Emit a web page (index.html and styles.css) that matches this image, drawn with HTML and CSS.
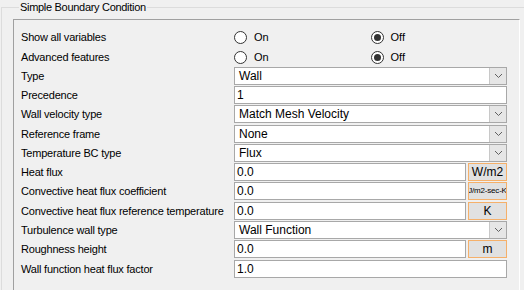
FILE: index.html
```html
<!DOCTYPE html>
<html>
<head>
<meta charset="utf-8">
<link rel="stylesheet" href="styles.css">
</head>
<body>
<fieldset class="group">
  <legend class="group-title">Simple Boundary Condition</legend>
  <div class="panel">
    <div class="grid">
      <div class="label radio-label">Show all variables</div>
      <div class="radios">
        <label class="radio"><span class="dot"></span><span>On</span></label>
        <label class="radio"><span class="dot checked"></span><span>Off</span></label>
      </div>

      <div class="label radio-label">Advanced features</div>
      <div class="radios">
        <label class="radio"><span class="dot"></span><span>On</span></label>
        <label class="radio"><span class="dot checked"></span><span>Off</span></label>
      </div>

      <div class="label">Type</div>
      <div class="combo"><span class="value">Wall</span><span class="drop"><svg width="9" height="6" viewBox="0 0 9 6"><polyline points="1,1 4.5,4.5 8,1" fill="none" stroke="#606060" stroke-width="1"/></svg></span></div>

      <div class="label">Precedence</div>
      <div class="field"><span class="input">1</span></div>

      <div class="label">Wall velocity type</div>
      <div class="combo"><span class="value">Match Mesh Velocity</span><span class="drop"><svg width="9" height="6" viewBox="0 0 9 6"><polyline points="1,1 4.5,4.5 8,1" fill="none" stroke="#606060" stroke-width="1"/></svg></span></div>

      <div class="label">Reference frame</div>
      <div class="combo"><span class="value">None</span><span class="drop"><svg width="9" height="6" viewBox="0 0 9 6"><polyline points="1,1 4.5,4.5 8,1" fill="none" stroke="#606060" stroke-width="1"/></svg></span></div>

      <div class="label">Temperature BC type</div>
      <div class="combo"><span class="value">Flux</span><span class="drop"><svg width="9" height="6" viewBox="0 0 9 6"><polyline points="1,1 4.5,4.5 8,1" fill="none" stroke="#606060" stroke-width="1"/></svg></span></div>

      <div class="label">Heat flux</div>
      <div class="field"><span class="input">0.0</span><span class="unit">W/m2</span></div>

      <div class="label">Convective heat flux coefficient</div>
      <div class="field"><span class="input">0.0</span><span class="unit small">J/m2-sec-K</span></div>

      <div class="label">Convective heat flux reference temperature</div>
      <div class="field"><span class="input">0.0</span><span class="unit">K</span></div>

      <div class="label">Turbulence wall type</div>
      <div class="combo"><span class="value">Wall Function</span><span class="drop"><svg width="9" height="6" viewBox="0 0 9 6"><polyline points="1,1 4.5,4.5 8,1" fill="none" stroke="#606060" stroke-width="1"/></svg></span></div>

      <div class="label">Roughness height</div>
      <div class="field"><span class="input">0.0</span><span class="unit">m</span></div>

      <div class="label">Wall function heat flux factor</div>
      <div class="field"><span class="input">1.0</span></div>
    </div>
  </div>
</fieldset>
</body>
</html>
```
FILE: styles.css
```css
html, body {
  margin: 0;
  padding: 0;
  background: #f0f0f0;
  width: 524px;
  height: 290px;
  overflow: hidden;
}
body {
  font-family: "Liberation Sans", Arial, sans-serif;
  font-size: 11px;
  color: #000;
}
.group {
  box-sizing: border-box;
  margin: 0 0 0 1px;
  padding: 5px 0 0 11px;
  border: 1px solid #dcdcdc;
  border-right: none;
  border-bottom: none;
  width: 523px;
  height: 290px;
  min-width: 0;
}
.group-title {
  padding: 0 1px;
  margin-left: 6px;
  font-size: 11px;
  line-height: 14px;
  letter-spacing: -0.3px;
}
.panel {
  width: 498px;
  height: 263px;
  border-top: 1px solid #a0a0a0;
  border-left: 1px solid #a0a0a0;
  border-right: 1px solid #ffffff;
  padding: 7px 0 0 7px;
}
.grid {
  display: grid;
  grid-template-columns: 213px 273px;
  grid-template-rows: 20px 19.7px repeat(11, 19.3px);
  align-items: start;
}
.label {
  height: 18px;
  line-height: 18px;
  white-space: nowrap;
  letter-spacing: -0.2px;
}
.radio-label {
  height: 20px;
  line-height: 20px;
}
.radios {
  display: flex;
  height: 20px;
  align-items: center;
}
.radio {
  display: flex;
  align-items: center;
  gap: 7px;
  width: 139px;
}
.dot {
  box-sizing: border-box;
  width: 13px;
  height: 13px;
  border: 1px solid #333333;
  border-radius: 50%;
  background: #ffffff;
  position: relative;
}
.dot.checked::after {
  content: "";
  position: absolute;
  left: 2px;
  top: 2px;
  width: 7px;
  height: 7px;
  border-radius: 50%;
  background: #333333;
}
.combo {
  box-sizing: border-box;
  height: 18px;
  border: 1px solid #a8a8a8;
  background: #ffffff;
  display: flex;
  align-items: stretch;
}
.combo .value {
  flex: 1;
  padding-left: 4px;
  line-height: 16px;
  font-size: 12px;
}
.drop {
  box-sizing: border-box;
  width: 17px;
  background: #e6e6e6;
  border-left: 1px solid #c8c8c8;
  display: flex;
  align-items: center;
  justify-content: center;
}
.field {
  height: 18px;
  display: flex;
  gap: 2px;
}
.input {
  box-sizing: border-box;
  flex: 1;
  height: 18px;
  border: 1px solid #a8a8a8;
  background: #ffffff;
  padding-left: 2px;
  line-height: 16px;
  font-size: 12px;
}
.unit {
  box-sizing: border-box;
  width: 39px;
  height: 18px;
  border: 1px solid #f5b06a;
  background: #e1e1e1;
  font-size: 12px;
  line-height: 16px;
  text-align: center;
  overflow: hidden;
  white-space: nowrap;
  display: flex;
  justify-content: center;
}
.unit.small {
  font-size: 8px;
  letter-spacing: -0.2px;
}
```
